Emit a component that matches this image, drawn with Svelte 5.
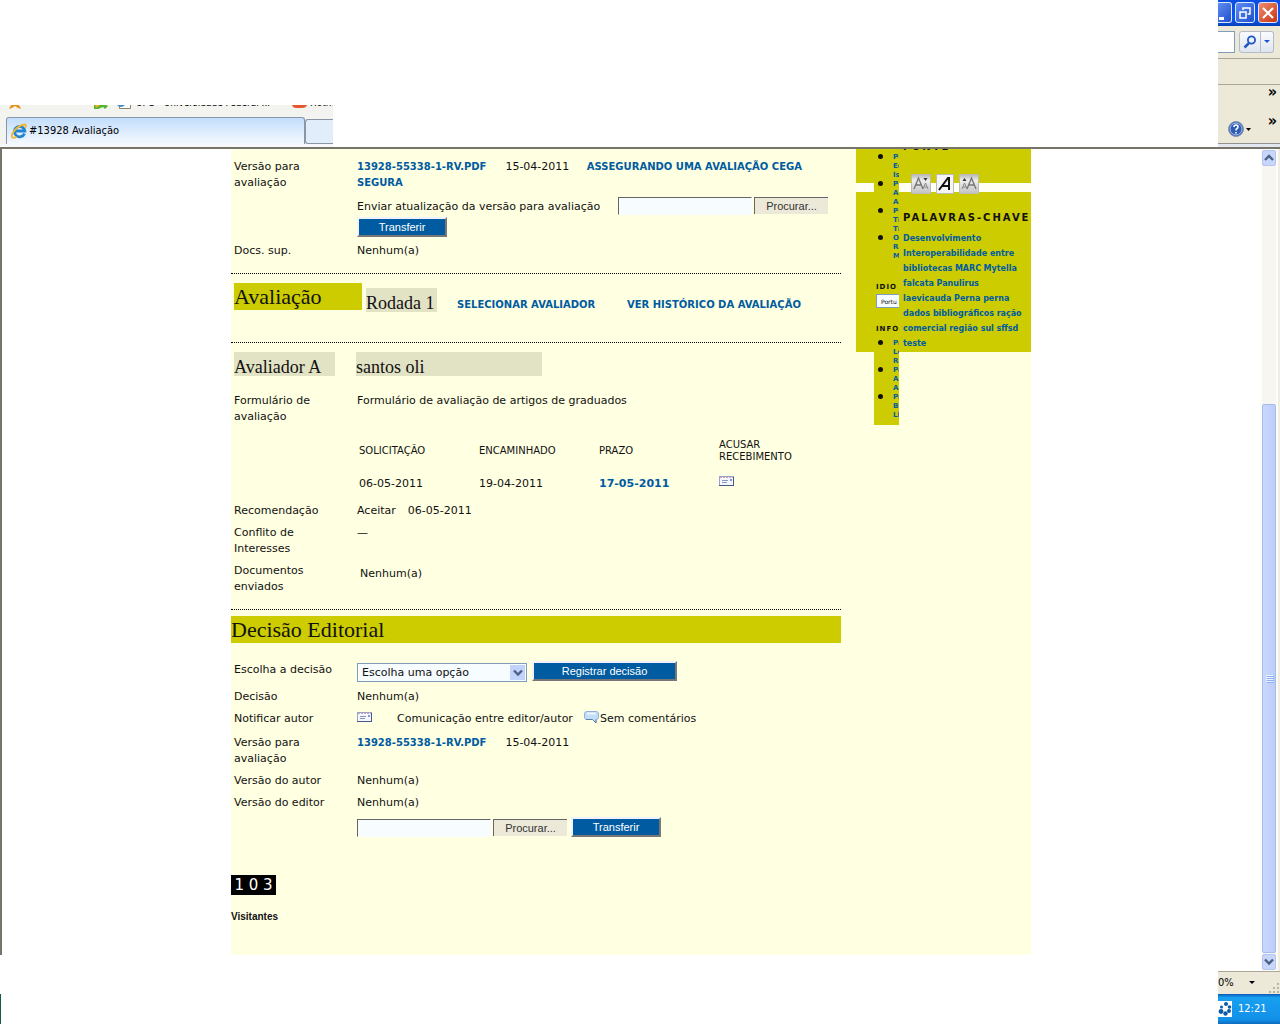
<script lang="ts">
  const navGroups = [
    ["Po", "Ed", "Is"],
    ["Po", "Au", "As"],
    ["Po", "Tí", "Tí"],
    ["O", "Re", "M"],
  ];
  const infoGroups = [
    ["Pa", "Le", "Re"],
    ["Pa", "Au", "Au"],
    ["Pa", "Bi", "Ll"],
  ];
  const keywords = [
    "Desenvolvimento",
    "Interoperabilidade entre bibliotecas",
    "MARC",
    "Mytella falcata",
    "Panulirus laevicauda",
    "Perna perna",
    "dados bibliográficos",
    "ração comercial",
    "região sul",
    "sffsd",
    "teste",
  ];

  let reviewFile = $state("");
  let editorFile = $state("");
  let decision = $state("");
</script>

{#snippet mail()}
  <svg class="mail" width="15" height="10" viewBox="0 0 15 10" aria-hidden="true">
    <rect x="0.5" y="0.5" width="14" height="9" fill="#f4f7ff" stroke="#98a2cc" />
    <path d="M1 1.5h13" stroke="#d0a4b4" stroke-dasharray="2 1" />
    <path d="M3 4.5h6M3 6.5h5" stroke="#8a95bb" />
    <rect x="11" y="3" width="2" height="2" fill="#7d9bd6" />
    <path d="M0 9.5h15M14.5 1v8" stroke="#4b5688" />
  </svg>
{/snippet}

{#snippet chevron(d: string)}
  <svg width="10" height="8" viewBox="0 0 10 8" aria-hidden="true">
    <path {d} fill="none" stroke="#4d6185" stroke-width="2.4" />
  </svg>
{/snippet}

<div class="window">
  <header class="chrome">
    <div class="tab-area">
      <div class="favorites">
        <svg width="12" height="5" viewBox="0 0 12 5" aria-hidden="true">
          <path d="M2 0h8l2 4-3-1-3-2-3 2-3 1z" fill="#e8951c" />
        </svg>
        <span class="divider"></span>
        <svg width="16" height="5" viewBox="0 0 16 5" aria-hidden="true">
          <path d="M1 0h12l2 1-3 3-2-2-5 2H1z" fill="#54b52c" />
          <path d="M2 0l5 0-4 3z" fill="#f0b020" />
        </svg>
        <svg class="page-icon" width="15" height="5" viewBox="0 0 15 5" aria-hidden="true">
          <path d="M2.5 0v3.5h11V0" fill="#fff" stroke="#8a8468" />
          <path d="M0 0q4 4 8 0" fill="#3c8ccc" />
        </svg>
        <span class="fav-text">UFG - Universidade Federal ...</span>
        <svg width="15" height="5" viewBox="0 0 15 5" aria-hidden="true">
          <path d="M0 0h15q-1 3-5 3H4Q1 3 0 0z" fill="#e8562c" />
        </svg>
        <span class="fav-text hot">Hotm</span>
      </div>
      <div class="tabs">
        <div class="tab">
          <svg width="16" height="16" viewBox="0 0 16 16" aria-hidden="true">
            <path d="M13.5 10.5A5.2 5.2 0 1 1 13.8 8H5" fill="none" stroke="#2484cf" stroke-width="2.8" />
            <path d="M1.5 15C-1 11 6 2.5 13.5 1.5c2 0 1.5 2 .5 3.5" fill="none" stroke="#f0b72d" stroke-width="1.8" />
            <path d="M1.5 14.5q2 1 4-1" fill="none" stroke="#f0b72d" stroke-width="1.8" />
          </svg>
          <span>#13928 Avaliação</span>
        </div>
        <div class="new-tab"></div>
      </div>
    </div>

    <div class="tools">
      <div class="title-bar">
        <button class="win min" aria-label="Minimizar">
          <svg width="12" height="20" viewBox="0 0 12 20"><path d="M0 15.5h5" stroke="#fff" stroke-width="3" /></svg>
        </button>
        <button class="win" aria-label="Restaurar">
          <svg width="18" height="18" viewBox="0 0 18 18">
            <path d="M7 6V4h7v6h-2.5M6.5 4h8" fill="none" stroke="#fff" stroke-width="1.5" />
            <path d="M4 8h6v6H4zM3.5 8h7" fill="none" stroke="#fff" stroke-width="1.5" />
          </svg>
        </button>
        <button class="win close" aria-label="Fechar">
          <svg width="18" height="18" viewBox="0 0 18 18"><path d="M4 4l10 10M14 4L4 14" stroke="#fff" stroke-width="2.2" /></svg>
        </button>
      </div>
      <div class="search-bar">
        <span class="search-end"></span>
        <button class="search" aria-label="Pesquisar">
          <svg width="14" height="14" viewBox="0 0 14 14">
            <path d="M6 8l-4.5 4.5" stroke="#2257c4" stroke-width="2.5" />
            <circle cx="8.5" cy="5" r="3.6" fill="#e8f2ff" stroke="#2257c4" stroke-width="1.8" />
          </svg>
        </button>
        <button class="search drop" aria-label="Opções de pesquisa">
          <svg width="6" height="4" viewBox="0 0 6 4"><path d="M0 0h6L3 3z" fill="#1c55cc" /></svg>
        </button>
      </div>
      <div class="menu-row"></div>
      <div class="links-row">»</div>
      <div class="command-row">
        <svg width="32" height="18" viewBox="0 0 32 18" aria-hidden="true">
          <circle cx="8" cy="9" r="7.5" fill="#2f5cb5" stroke="#8c95a8" />
          <circle cx="8" cy="9" r="6" fill="none" stroke="#aec4ee" />
          <path d="M6 7q0-2 2-2t2 2q0 1-1 1.5T8 10.5M8 12v1.5" fill="none" stroke="#fff" stroke-width="1.6" />
          <path d="M18 8h5l-2.5 3z" fill="#000" />
        </svg>
        <span>»</span>
      </div>
    </div>
  </header>

  <main class="viewport">
    <div class="canvas">
      <div class="page">
        <div class="content">
          <section class="rows files">
            <div class="row">
              <span>Versão para avaliação</span>
              <div>
                <a href="#versao">13928-55338-1-RV.PDF</a><span class="date">15-04-2011</span>
                <a class="cega" href="#cega">ASSEGURANDO UMA AVALIAÇÃO CEGA SEGURA</a>
              </div>
            </div>
            <div class="row">
              <span></span>
              <div class="upload-block">
                <div class="upload">
                  <label for="review-file">Enviar atualização da versão para avaliação</label>
                  <input id="review-file" type="text" bind:value={reviewFile} />
                  <button class="browse">Procurar...</button>
                </div>
                <button class="blue">Transferir</button>
              </div>
            </div>
            <div class="row">
              <span>Docs. sup.</span>
              <span>Nenhum(a)</span>
            </div>
          </section>

          <section class="round">
            <h3>Avaliação</h3>
            <h4>Rodada 1</h4>
            <a href="#selecionar">SELECIONAR AVALIADOR</a>
            <a href="#historico">VER HISTÓRICO DA AVALIAÇÃO</a>
          </section>

          <section class="reviewer">
            <div class="reviewer-head">
              <h4>Avaliador A</h4>
              <h4>santos oli</h4>
            </div>
            <div class="rows">
              <div class="row">
                <span>Formulário de avaliação</span>
                <span>Formulário de avaliação de artigos de graduados</span>
              </div>
              <div class="row dates">
                <span></span>
                <table>
                  <thead>
                    <tr><th>SOLICITAÇÃO</th><th>ENCAMINHADO</th><th>PRAZO</th><th>ACUSAR RECEBIMENTO</th></tr>
                  </thead>
                  <tbody>
                    <tr>
                      <td>06-05-2011</td>
                      <td>19-04-2011</td>
                      <td><a class="due" href="#prazo">17-05-2011</a></td>
                      <td><a href="#acusar" aria-label="Acusar recebimento">{@render mail()}</a></td>
                    </tr>
                  </tbody>
                </table>
              </div>
              <div class="row">
                <span>Recomendação</span>
                <div>Aceitar<span class="date">06-05-2011</span></div>
              </div>
              <div class="row">
                <span>Conflito de Interesses</span>
                <span>—</span>
              </div>
              <div class="row">
                <span>Documentos enviados</span>
                <span class="sent">Nenhum(a)</span>
              </div>
            </div>
          </section>

          <section class="decision">
            <h3>Decisão Editorial</h3>
            <div class="rows">
              <div class="row choose">
                <label for="decision">Escolha a decisão</label>
                <div class="controls">
                  <div class="select">
                    <select id="decision" bind:value={decision}>
                      <option value="">Escolha uma opção</option>
                      <option value="accept">Aceitar</option>
                      <option value="decline">Rejeitar</option>
                    </select>
                    <span class="select-arrow">{@render chevron("M1 1.5l4 4 4-4")}</span>
                  </div>
                  <button class="blue wide">Registrar decisão</button>
                </div>
              </div>
              <div class="row">
                <span>Decisão</span>
                <span>Nenhum(a)</span>
              </div>
              <div class="row notify">
                <span>Notificar autor</span>
                <div class="controls">
                  <a href="#notificar" aria-label="Notificar autor">{@render mail()}</a>
                  <span class="between">Comunicação entre editor/autor</span>
                  <svg class="bubble" width="15" height="13" viewBox="0 0 15 13" aria-hidden="true">
                    <path d="M3 .5h9q2.5 0 2.5 2.5v3q0 2.5-2.5 2.5v3.5L8.5 8.5H3Q.5 8.5.5 6V3Q.5.5 3 .5z" fill="#c3def8" stroke="#8fb1d8" />
                    <path d="M3 2.5h9" stroke="#eaf5ff" stroke-width="2" />
                    <path d="M2 8.5h6.5l3.5 3.5V8.5" fill="none" stroke="#5f7fae" />
                  </svg>
                  <span>Sem comentários</span>
                </div>
              </div>
              <div class="row">
                <span>Versão para avaliação</span>
                <div><a href="#versao">13928-55338-1-RV.PDF</a><span class="date">15-04-2011</span></div>
              </div>
              <div class="row">
                <span>Versão do autor</span>
                <span>Nenhum(a)</span>
              </div>
              <div class="row">
                <span>Versão do editor</span>
                <span>Nenhum(a)</span>
              </div>
              <div class="row">
                <span></span>
                <div class="upload editor">
                  <input type="text" aria-label="Versão do editor" bind:value={editorFile} />
                  <button class="browse">Procurar...</button>
                  <button class="blue after">Transferir</button>
                </div>
              </div>
            </div>
          </section>

          <div class="counter">1 0 3</div>
          <p class="visitors">Visitantes</p>
        </div>

        <aside class="sidebar">
          <div class="block font-block">
            <h5>FONTE</h5>
            <div class="font-sizes">
              <button aria-label="Diminuir fonte">
                <svg width="20" height="20" viewBox="0 0 20 20">
                  <path d="M3 15L7.5 4 12 15M5 11h5" fill="none" stroke="#777" stroke-width="1.4" />
                  <path d="M12 15l2.5-6 2.5 6M13 13h3" fill="none" stroke="#888" />
                  <path d="M12.5 4h4l-2 3z" fill="#333" />
                </svg>
              </button>
              <button class="normal" aria-label="Fonte normal">
                <svg width="18" height="20" viewBox="0 0 18 20">
                  <path d="M3 16L12 4h1v12M6 12h7" fill="none" stroke="#111" stroke-width="2" />
                </svg>
              </button>
              <button aria-label="Aumentar fonte">
                <svg width="20" height="20" viewBox="0 0 20 20">
                  <path d="M8 15l4.5-11L17 15M10 11h5" fill="none" stroke="#777" stroke-width="1.4" />
                  <path d="M3 15l2.5-6L8 15M4 13h3" fill="none" stroke="#888" />
                  <path d="M3.5 7h4l-2-3z" fill="#333" />
                </svg>
              </button>
            </div>
          </div>
          <div class="block keywords">
            <h5>PALAVRAS-CHAVE</h5>
            <p>
              {#each keywords as word (word)}
                <a href="#busca">{word}</a>{" "}
              {/each}
            </p>
          </div>

          <!-- navigation block slides under the keyword text and is cut off at its edge -->
          <nav class="nav">
            <ul>
              {#each navGroups as lines}
                <li><a href="#nav">{#each lines as line}<span>{line}</span>{/each}</a></li>
              {/each}
            </ul>
            <label class="nav-title language" for="language">IDIO</label>
            <select id="language"><option>Portu</option></select>
            <div class="nav-title info">INFO</div>
            <ul>
              {#each infoGroups as lines}
                <li><a href="#info">{#each lines as line}<span>{line}</span>{/each}</a></li>
              {/each}
            </ul>
          </nav>
        </aside>
      </div>
    </div>

    <div class="scrollbar">
      <button class="scroll-btn" aria-label="Rolar para cima">{@render chevron("M1 6l4-4 4 4")}</button>
      <div class="track">
        <div class="thumb"><i></i><i></i><i></i><i></i></div>
      </div>
      <button class="scroll-btn" aria-label="Rolar para baixo">{@render chevron("M1 1.5l4 4 4-4")}</button>
    </div>
  </main>

  <footer class="bottom">
    <div class="edge"></div>
    <div class="corner">
      <div class="status">
        <span>0%</span>
        <svg width="6" height="4" viewBox="0 0 6 4" aria-hidden="true"><path d="M0 0h6L3 3z" fill="#000" /></svg>
        <svg class="grip" width="12" height="12" viewBox="0 0 12 12" aria-hidden="true">
          <path d="M9 1h2v2H9zM5 5h2v2H5zM9 5h2v2H9zM1 9h2v2H1zM5 9h2v2H5zM9 9h2v2H9z" fill="#b8b5a2" />
        </svg>
      </div>
      <div class="tray">
        <svg width="14" height="16" viewBox="0 0 14 16" aria-hidden="true">
          <rect width="14" height="16" fill="#fff" />
          <g fill="#0c5ca8">
            <circle cx="8" cy="3" r="2" />
            <circle cx="11.5" cy="6" r="1.8" />
            <circle cx="11" cy="10" r="2" />
            <circle cx="7.5" cy="12.5" r="2.2" />
            <circle cx="3" cy="10.5" r="2.4" />
            <circle cx="3.5" cy="6" r="1.5" />
          </g>
        </svg>
        <span>12:21</span>
      </div>
    </div>
  </footer>
</div>

<style>
  :global(body) {
    margin: 0;
    background: #fff;
    color: #111;
    font: 11px/16px "DejaVu Sans", Verdana, sans-serif;
  }
  * {
    box-sizing: border-box;
  }
  h3,
  h4,
  h5,
  p,
  ul {
    margin: 0;
    padding: 0;
  }
  button,
  input,
  select {
    margin: 0;
    font-family: inherit;
  }
  svg {
    display: block;
    flex: none;
  }
  a {
    color: #005ba1;
    font-size: 10px;
    font-weight: bold;
    text-decoration: none;
  }
  .window {
    display: flex;
    flex-direction: column;
    min-height: 100vh;
  }

  /* browser chrome */
  .chrome {
    display: flex;
    justify-content: space-between;
    align-items: flex-end;
    font-family: "DejaVu Sans Condensed", Tahoma, sans-serif;
  }
  .tab-area {
    width: 333px;
    background: #f3f3ef;
  }
  .favorites {
    display: flex;
    height: 12px;
    padding-left: 9px;
    overflow: hidden;
  }
  .divider {
    width: 1px;
    height: 5px;
    margin: 0 9px 0 63px;
    background: #aaa;
  }
  .page-icon {
    margin: 0 4px 0 8px;
  }
  .fav-text {
    flex: none;
    width: 146px;
    height: 14px;
    margin: -9px 10px 0 0;
    color: #000;
    font-size: 10px;
    line-height: 14px;
    white-space: nowrap;
  }
  .hot {
    margin-left: 3px;
  }
  .tabs {
    display: flex;
    height: 30px;
    border-bottom: 3px solid #f6f8fc;
  }
  .tab {
    display: flex;
    align-items: center;
    gap: 2px;
    width: 299px;
    margin-left: 6px;
    padding-left: 4px;
    border: 1px solid #8b95a8;
    border-bottom: 0;
    border-radius: 3px 3px 0 0;
    background: linear-gradient(#c3defc, #f4f8fe);
    color: #000;
  }
  .new-tab {
    flex: 1;
    margin-top: 2px;
    border: 1px solid #8b95a8;
    border-width: 1px 0 1px 1px;
    border-radius: 3px 0 0 3px;
    background: #e1edfb;
  }
  .tools {
    width: 62px;
    background: #ede9d9;
  }
  .title-bar {
    display: flex;
    gap: 3px;
    height: 26px;
    padding: 2px 2px 0 0;
    background: linear-gradient(#0b4de0, #0a5af5 70%, #0540b8);
  }
  .win {
    display: grid;
    place-items: center;
    flex: 1;
    height: 21px;
    padding: 0;
    border: 1px solid #dce8ff;
    border-radius: 3px;
    background: linear-gradient(135deg, #5f8df0, #1f4fd0);
  }
  .min {
    flex: 0 0 14px;
    border-left: 0;
    border-radius: 0 3px 3px 0;
    overflow: hidden;
  }
  .close {
    background: linear-gradient(135deg, #ef8d6e, #c93412);
  }
  .search-bar {
    display: flex;
    height: 33px;
    padding: 5px 6px 5px 0;
    border-bottom: 1px solid #aaa797;
  }
  .search-end {
    width: 17px;
    margin-right: 4px;
    border: 1px solid #7f9db9;
    border-left: 0;
    background: #fff;
  }
  .search {
    display: grid;
    place-items: center;
    width: 22px;
    padding: 0;
    border: 1px solid #b5bbc8;
    border-radius: 3px 0 0 3px;
    background: linear-gradient(#fafbff, #dfe5ee);
  }
  .drop {
    width: 13px;
    border-left: 0;
    border-radius: 0 3px 3px 0;
  }
  .menu-row {
    height: 26px;
    border-bottom: 1px solid #aaa797;
  }
  .links-row {
    height: 24px;
    padding-right: 3px;
    color: #000;
    font-size: 16px;
    font-weight: bold;
    line-height: 14px;
    text-align: right;
  }
  .command-row {
    display: flex;
    justify-content: space-between;
    height: 38px;
    padding: 11px 3px 0 10px;
    border-bottom: 3px solid #e3e8f0;
    box-shadow: inset 0 -1px #909090;
    color: #000;
    font-size: 16px;
    font-weight: bold;
    line-height: 1px;
  }

  /* document area */
  .viewport {
    display: flex;
    flex: 1;
    overflow: hidden;
    border-top: 2px solid #77746a;
  }
  .canvas {
    flex: 1;
    margin-bottom: 16px;
    border-left: 2px solid #77746a;
  }
  .page {
    display: flex;
    gap: 15px;
    max-width: 800px;
    min-height: 100%;
    margin: 0 auto;
    background: #ffffe1;
  }
  .content {
    flex: 1;
    min-width: 0;
    padding-bottom: 28px;
  }
  .rows {
    display: flex;
    flex-direction: column;
    gap: 6px;
    padding-left: 3px;
  }
  .row {
    display: grid;
    grid-template-columns: 93px 1fr;
    column-gap: 30px;
  }
  .files {
    padding-top: 10px;
    padding-bottom: 14px;
  }
  .date {
    margin-left: 12px;
  }
  a + .date {
    margin-left: 19px;
  }
  .cega {
    margin-left: 14px;
  }
  .upload-block {
    display: flex;
    flex-direction: column;
    gap: 1px;
  }
  .upload {
    display: flex;
    align-items: flex-start;
  }
  .upload label {
    flex: none;
    width: 261px;
    line-height: 19px;
  }
  .upload input {
    width: 134px;
    height: 18px;
    padding: 0 2px;
    border: 1px solid #f7fcff;
    border-top-color: #666;
    border-left-color: #666;
    background: #f7fcff;
    font-size: 11px;
  }
  .browse {
    width: 74px;
    height: 17px;
    margin-left: 2px;
    padding: 0;
    border: 0 solid #666;
    border-width: 1px 0 0 1px;
    background: #ece9d8;
    color: #333;
    font: 11px/16px "Liberation Sans", Arial, sans-serif;
  }
  .blue {
    width: 90px;
    height: 20px;
    padding: 0;
    border: 2px solid #777;
    border-top-color: #f0f3ff;
    border-left-color: #f0f3ff;
    background: #005ba1;
    color: #fff;
    font: 11px/14px "Liberation Sans", Arial, sans-serif;
  }
  .wide {
    width: 145px;
  }
  .editor {
    padding-top: 2px;
  }
  .after {
    margin: -2px 0 0 4px;
  }

  h3,
  h4 {
    font-family: "Liberation Serif", Georgia, serif;
    font-weight: normal;
    white-space: nowrap;
  }
  h3 {
    background: #cc0;
    font-size: 22px;
    line-height: 27px;
  }
  h4 {
    height: 24px;
    background: #e2e2c4;
    font-size: 18px;
    line-height: 30px;
  }
  .round {
    display: flex;
    align-items: flex-start;
    padding: 9px 0 29px 3px;
    border-top: 1px dotted #000;
  }
  .round h3 {
    width: 128px;
    margin-right: 4px;
  }
  .round h4 {
    width: 71px;
    margin-top: 5px;
  }
  .round a {
    width: 150px;
    margin: 14px 0 0 20px;
    white-space: nowrap;
  }
  .reviewer {
    padding: 9px 0 14px;
    border-top: 1px dotted #000;
  }
  .reviewer-head {
    display: flex;
    gap: 21px;
    margin-bottom: 17px;
    padding-left: 3px;
  }
  .reviewer-head h4 {
    width: 101px;
  }
  .reviewer-head h4 + h4 {
    width: 186px;
  }
  table {
    width: 480px;
    border-collapse: collapse;
    table-layout: fixed;
  }
  .dates {
    padding: 8px 0 5px;
  }
  th,
  td {
    padding: 0 30px 0 2px;
    font-weight: normal;
    text-align: left;
  }
  th {
    height: 24px;
    font-size: 10px;
    line-height: 12px;
  }
  td {
    height: 29px;
    padding-top: 13px;
    padding-right: 0;
    vertical-align: top;
  }
  .due {
    font-size: 11px;
  }
  .sent {
    padding: 3px 0 0 3px;
  }
  .decision {
    padding-top: 6px;
    border-top: 1px dotted #000;
  }
  .decision h3 {
    margin-bottom: 18px;
  }
  .controls {
    display: flex;
    align-items: flex-start;
  }
  .choose {
    height: 22px;
  }
  .choose label {
    line-height: 18px;
    white-space: nowrap;
  }
  .select {
    position: relative;
    width: 170px;
    margin: 2px 5px 0 0;
  }
  .select select {
    display: block;
    width: 100%;
    height: 19px;
    padding: 0 4px;
    border: 1px solid #7f9db9;
    border-radius: 0;
    background: #f7fcff;
    color: #111;
    font-size: 11px;
    appearance: none;
  }
  .select-arrow {
    position: absolute;
    top: 2px;
    right: 2px;
    display: grid;
    place-items: center;
    width: 15px;
    height: 15px;
    background: #c1d2fb;
    pointer-events: none;
  }
  .notify .mail {
    margin-top: 1px;
  }
  .notify {
    margin-bottom: 2px;
  }
  .between {
    width: 187px;
    margin-left: 25px;
    white-space: nowrap;
  }
  .bubble {
    margin-right: 1px;
  }
  .counter {
    width: 45px;
    margin-top: 38px;
    background: #000;
    color: #fff;
    font-size: 15px;
    line-height: 20px;
    text-align: center;
    white-space: nowrap;
  }
  .visitors {
    margin-top: 14px;
    font: bold 10px/16px "Liberation Sans", Arial, sans-serif;
  }

  /* right-hand blocks */
  .sidebar {
    position: relative;
    flex: 0 0 175px;
  }
  .block {
    display: flow-root;
    padding-left: 47px;
    background: #cc0;
  }
  h5 {
    font-size: 10px;
    font-weight: bold;
    letter-spacing: 2px;
    line-height: 14px;
    white-space: nowrap;
  }
  .font-block {
    height: 43px;
    border-bottom: 9px solid #fffff2;
  }
  .font-block h5 {
    margin-top: -9px;
    padding-bottom: 20px;
  }
  .font-sizes {
    position: relative;
    z-index: 1;
    display: flex;
    gap: 5px;
    padding-left: 8px;
  }
  .font-sizes button {
    padding: 0;
    border: 1px solid #bbb;
    background: linear-gradient(#bbb, #eee 30%, #c4c4c4);
  }
  .font-sizes svg {
    margin: -1px;
  }
  .font-sizes .normal {
    background: #f5f5f5;
  }
  .keywords {
    height: 160px;
    padding-top: 19px;
  }
  .keywords p {
    margin-top: 6px;
    padding-right: 3px;
    font-size: 8px;
    line-height: 15px;
  }
  .keywords a {
    font-size: 8px;
  }
  .nav {
    position: absolute;
    top: 0;
    left: 18px;
    width: 25px;
    height: 276px;
    padding-top: 4px;
    overflow: hidden;
    background: #cc0;
  }
  .nav ul {
    list-style: none;
  }
  .nav li {
    position: relative;
    padding-left: 19px;
  }
  .nav li::before {
    content: "";
    position: absolute;
    top: 1px;
    left: 4px;
    width: 5px;
    height: 5px;
    border-radius: 50%;
    background: #111;
  }
  .nav a span {
    display: block;
    font-size: 7px;
    line-height: 9px;
  }
  .nav-title {
    display: block;
    margin-left: 2px;
    font-size: 7px;
    font-weight: bold;
    letter-spacing: 1px;
    line-height: 10px;
  }
  .language {
    margin-top: 21px;
  }
  .nav select {
    display: block;
    width: 80px;
    height: 14px;
    margin: 2px 0 0 2px;
    padding: 0 4px;
    border: 1px solid #7f9db9;
    background: #f7fcff;
    color: #111;
    font-size: 6px;
    appearance: none;
  }
  .info {
    margin: 16px 0 5px 2px;
  }

  .scrollbar {
    display: flex;
    flex-direction: column;
    width: 20px;
    padding: 1px 2px;
    border-right: 2px solid #f0eee4;
    background: #fdfdfa;
  }
  .scroll-btn {
    display: grid;
    place-items: center;
    flex: 0 0 16px;
    padding: 0;
    border: 1px solid #b3c5ee;
    border-radius: 2px;
    background: #c8d6fb;
  }
  .track {
    display: flex;
    flex: 1;
    flex-direction: column;
    padding-bottom: 1px;
    background: #f7f6f0;
  }
  .track::before {
    content: "";
    flex: 238;
  }
  .thumb {
    display: flex;
    flex: 548;
    flex-direction: column;
    align-items: center;
    justify-content: center;
    gap: 1px;
    border: 1px solid #a5bbee;
    border-radius: 2px;
    background: linear-gradient(90deg, #cad8fd, #bccdfa);
  }
  .thumb i {
    width: 7px;
    height: 1px;
    background: #eef4fe;
    box-shadow: 1px 1px #8cb0f8;
  }

  .bottom {
    display: flex;
    justify-content: space-between;
    height: 53px;
  }
  .edge {
    width: 1px;
    margin-top: 23px;
    background: #0f5a4a;
  }
  .corner {
    width: 62px;
    color: #000;
    font-family: "DejaVu Sans Condensed", Tahoma, sans-serif;
  }
  .status {
    display: flex;
    align-items: center;
    height: 23px;
    border-top: 1px solid #aaa797;
    background: #ece9d8;
  }
  .status span {
    margin-right: 15px;
  }
  .grip {
    align-self: flex-end;
    margin-left: auto;
  }
  .tray {
    display: flex;
    align-items: center;
    gap: 6px;
    height: 30px;
    background: linear-gradient(#0c59b9, #18a0f0 12%, #1290e8 85%, #0c6cc0);
    color: #fff;
  }
</style>
